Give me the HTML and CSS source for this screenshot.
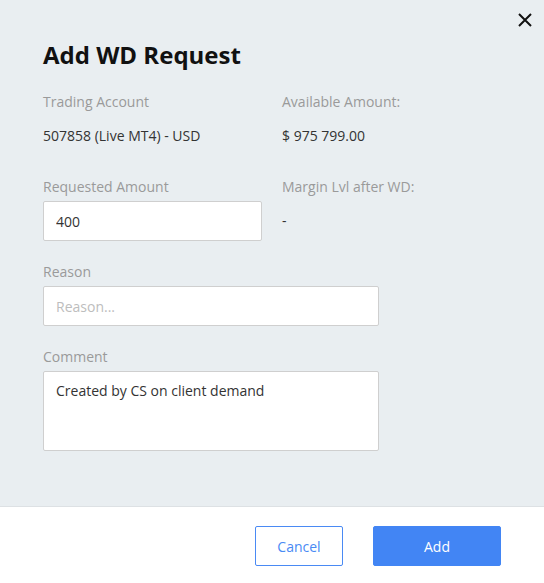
FILE: index.html
```html
<!DOCTYPE html>
<html lang="en">
<head>
<meta charset="utf-8">
<title>Add WD Request</title>
<link rel="stylesheet" href="styles.css">
</head>
<body>
<div class="modal">
  <div class="modal-body">
    <button class="close" aria-label="Close">
      <svg width="14" height="14" viewBox="0 0 14 14"><path d="M1 1 L13 13 M13 1 L1 13" stroke="#111" stroke-width="2" fill="none"/></svg>
    </button>
    <h1 class="title">Add WD Request</h1>
    <div class="grid">
      <div class="field">
        <div class="label">Trading Account</div>
        <div class="static">507858 (Live MT4) - USD</div>
      </div>
      <div class="field">
        <div class="label">Available Amount:</div>
        <div class="static">$ 975 799.00</div>
      </div>
      <div class="field">
        <div class="label">Requested Amount</div>
        <input class="input" type="text" value="400">
      </div>
      <div class="field">
        <div class="label">Margin Lvl after WD:</div>
        <div class="static">-</div>
      </div>
    </div>
    <div class="field">
      <div class="label">Reason</div>
      <input class="input wide" type="text" placeholder="Reason...">
    </div>
    <div class="field">
      <div class="label">Comment</div>
      <textarea class="textarea wide">Created by CS on client demand</textarea>
    </div>
  </div>
  <div class="modal-footer">
    <button class="btn btn-outline">Cancel</button>
    <button class="btn btn-primary">Add</button>
  </div>
</div>
</body>
</html>
```
FILE: styles.css
```css
* { box-sizing: border-box; }
html, body { margin: 0; padding: 0; }
body {
  font-family: "Open Sans", "Liberation Sans", sans-serif;
  background: #e9eef1;
  color: #333;
}
.modal {
  width: 544px;
  height: 583px;
  display: flex;
  flex-direction: column;
}
.modal-body {
  position: relative;
  flex: 1;
  padding: 39px 43px 0 43px;
  background: #e9eef1;
}
.close {
  position: absolute;
  top: 13px;
  right: 12px;
  width: 14px;
  height: 14px;
  padding: 0;
  border: 0;
  background: none;
  display: block;
}
.close svg { display: block; }
.title {
  margin: 0 0 22px 0;
  font-size: 24px;
  line-height: 31px;
  font-weight: 700;
  color: #111;
}
.grid {
  display: grid;
  grid-template-columns: 219px 219px;
  column-gap: 20px;
}
.field {
  display: flex;
  flex-direction: column;
  gap: 4px;
  margin-bottom: 21px;
}
.label {
  font-size: 14px;
  line-height: 20px;
  color: #9a9a9a;
}
.static {
  height: 40px;
  line-height: 40px;
  font-size: 14px;
  color: #333;
}
.input, .textarea {
  font-family: "Open Sans", "Liberation Sans", sans-serif;
  font-size: 14px;
  color: #333;
  background: #fff;
  border: 1px solid #cfcfcf;
  border-radius: 2px;
  outline: none;
  margin: 0;
}
.input {
  height: 40px;
  padding: 0 12px;
  width: 219px;
}
.input::placeholder { color: #bdbdbd; }
.wide { width: 336px; }
.textarea {
  height: 80px;
  padding: 9px 12px;
  line-height: 20px;
  resize: none;
  display: block;
}
.modal-footer {
  height: 77px;
  background: #fff;
  border-top: 1px solid #dde1e4;
  display: flex;
  justify-content: flex-end;
  align-items: flex-start;
  gap: 30px;
  padding: 19px 43px 0 0;
}
.btn {
  height: 40px;
  font-family: "Open Sans", "Liberation Sans", sans-serif;
  font-size: 14px;
  border-radius: 2px;
  cursor: pointer;
}
.btn-outline {
  width: 88px;
  background: #fff;
  color: #4a8af4;
  border: 1px solid #4a8af4;
}
.btn-primary {
  width: 128px;
  background: #4285f4;
  color: #fff;
  border: 1px solid #4285f4;
}
```
